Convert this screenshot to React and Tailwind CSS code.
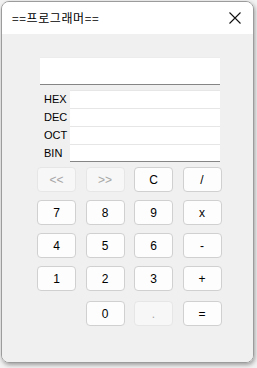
// App.jsx
import React from "react";

const rows = [
  [
    { t: "<<", off: true },
    { t: ">>", off: true },
    { t: "C" },
    { t: "/" },
  ],
  [{ t: "7" }, { t: "8" }, { t: "9" }, { t: "x" }],
  [{ t: "4" }, { t: "5" }, { t: "6" }, { t: "-" }],
  [{ t: "1" }, { t: "2" }, { t: "3" }, { t: "+" }],
];

const lastRow = [null, { t: "0" }, { t: ".", off: true }, { t: "=" }];

const Btn = ({ b }) => {
  if (!b) return <div />;
  return (
    <button
      className={`h-[25px] w-[39px] rounded-[4px] border text-[12px] leading-none flex items-center justify-center ${
        b.off
          ? "bg-[#f7f7f7] border-[#e6e6e6] text-[#a6a6a6]"
          : "bg-[#fdfdfd] border-[#d0d0d0] text-black"
      }`}
    >
      {b.t}
    </button>
  );
};

const App = () => {
  return (
    <div
      className="w-[257px] h-[368px] bg-[#f2f2f2] overflow-hidden"
      style={{ fontFamily: '"Liberation Sans", "Noto Sans CJK KR", sans-serif' }}
    >
      <div className="ml-[1px] mt-[1px] w-[253px] h-[362px] rounded-[8px] border border-[#9c9c9c] overflow-hidden flex flex-col shadow-[1px_2px_4px_rgba(0,0,0,0.35)]">
        {/* title bar */}
        <div className="h-[32px] bg-white flex items-center justify-between pl-[10px] pr-[10px]">
          <span
            className="text-[12px] text-black tracking-[0.6px]"
            style={{ fontFamily: '"Noto Sans CJK KR", sans-serif' }}
          >
            ==프로그래머==
          </span>
          <svg width="12" height="12" viewBox="0 0 12 12" className="mr-[2px]">
            <path d="M0.5 0.5 L11.5 11.5 M11.5 0.5 L0.5 11.5" stroke="#111" strokeWidth="1.1" />
          </svg>
        </div>

        {/* body */}
        <div className="flex-1 bg-[#f0f0f0] pt-[23px] pl-[35px] flex flex-col">
          <div className="ml-[3px] w-[180px]">
            <div className="h-[28px] bg-white border-t border-[#ececec] border-b border-b-[#858585]" />
            <div className="mt-[5px] flex flex-col">
              {["HEX", "DEC", "OCT", "BIN"].map((l, i) => (
                <div key={l} className="flex h-[18px]">
                  <div className="w-[30px] pl-[4px] text-[11px] leading-[18px] text-black">{l}</div>
                  <div
                    className={`flex-1 bg-white border-t border-[#e6e6e6] ${
                      i === 3 ? "border-b border-b-[#858585]" : ""
                    }`}
                  />
                </div>
              ))}
            </div>
          </div>

          <div className="mt-[5px] grid grid-cols-[39px_39px_39px_39px] gap-x-[9.5px] gap-y-[8px]">
            {rows.map((r, ri) =>
              r.map((b, bi) => <Btn key={`${ri}-${bi}`} b={b} />)
            )}
          </div>
          <div className="mt-[10px] grid grid-cols-[39px_39px_39px_39px] gap-x-[9.5px]">
            {lastRow.map((b, i) => (
              <Btn key={i} b={b} />
            ))}
          </div>
        </div>
      </div>
    </div>
  );
};

export default App;
